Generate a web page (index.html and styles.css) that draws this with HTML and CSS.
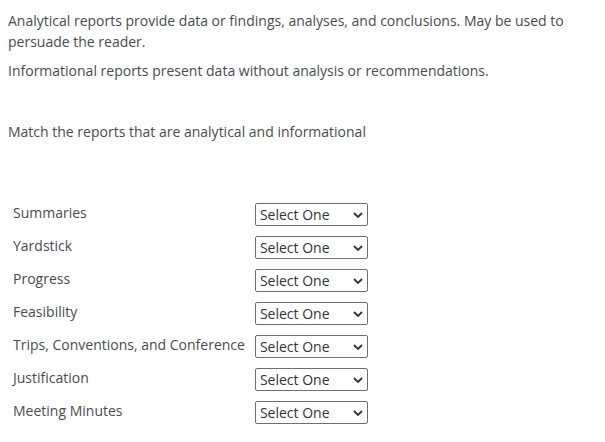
FILE: index.html
```html
<!DOCTYPE html>
<html>
<head>
<meta charset="utf-8">
<link rel="stylesheet" href="styles.css">
</head>
<body>
<div class="page">
  <p class="para">Analytical reports provide data or findings, analyses, and conclusions. May be used to persuade the reader.</p>
  <p class="para">Informational reports present data without analysis or recommendations.</p>
  <p class="para prompt">Match the reports that are analytical and informational</p>
  <table class="match">
    <tbody>
      <tr><td class="label">Summaries</td><td class="cell"><span class="sel"><select><option>Select One</option></select><svg class="chev" width="10" height="6" viewBox="0 0 10 6"><path d="M1 1 L5 5 L9 1" fill="none" stroke="#333" stroke-width="1.8"/></svg></span></td></tr>
      <tr><td class="label">Yardstick</td><td class="cell"><span class="sel"><select><option>Select One</option></select><svg class="chev" width="10" height="6" viewBox="0 0 10 6"><path d="M1 1 L5 5 L9 1" fill="none" stroke="#333" stroke-width="1.8"/></svg></span></td></tr>
      <tr><td class="label">Progress</td><td class="cell"><span class="sel"><select><option>Select One</option></select><svg class="chev" width="10" height="6" viewBox="0 0 10 6"><path d="M1 1 L5 5 L9 1" fill="none" stroke="#333" stroke-width="1.8"/></svg></span></td></tr>
      <tr><td class="label">Feasibility</td><td class="cell"><span class="sel"><select><option>Select One</option></select><svg class="chev" width="10" height="6" viewBox="0 0 10 6"><path d="M1 1 L5 5 L9 1" fill="none" stroke="#333" stroke-width="1.8"/></svg></span></td></tr>
      <tr><td class="label">Trips, Conventions, and Conference</td><td class="cell"><span class="sel"><select><option>Select One</option></select><svg class="chev" width="10" height="6" viewBox="0 0 10 6"><path d="M1 1 L5 5 L9 1" fill="none" stroke="#333" stroke-width="1.8"/></svg></span></td></tr>
      <tr><td class="label">Justification</td><td class="cell"><span class="sel"><select><option>Select One</option></select><svg class="chev" width="10" height="6" viewBox="0 0 10 6"><path d="M1 1 L5 5 L9 1" fill="none" stroke="#333" stroke-width="1.8"/></svg></span></td></tr>
      <tr><td class="label">Meeting Minutes</td><td class="cell"><span class="sel"><select><option>Select One</option></select><svg class="chev" width="10" height="6" viewBox="0 0 10 6"><path d="M1 1 L5 5 L9 1" fill="none" stroke="#333" stroke-width="1.8"/></svg></span></td></tr>
    </tbody>
  </table>
</div>
</body>
</html>
```
FILE: styles.css
```css
html, body {
  margin: 0;
  padding: 0;
  background: #ffffff;
}
body {
  font-family: "Open Sans", "DejaVu Sans", sans-serif;
  font-size: 14px;
  color: #494c4e;
}
.page {
  padding: 10px 8px 0 8px;
}
.para {
  margin: 0 0 8px 0;
  line-height: 21px;
}
.prompt {
  margin-top: 40px;
  margin-bottom: 0;
}
.match {
  border-collapse: collapse;
  margin-top: 56px;
}
.match tr {
  height: 33px;
}
.match td {
  padding: 0 5px;
  vertical-align: middle;
}
.label {
  white-space: nowrap;
  line-height: 21px;
  padding-bottom: 4px !important;
}
.sel {
  position: relative;
  display: block;
}
.sel select {
  appearance: none;
  -webkit-appearance: none;
  width: 113px;
  height: 23px;
  border: 1px solid #6f6f6f;
  border-radius: 2px;
  background: #fff;
  font-family: "Open Sans", "DejaVu Sans", sans-serif;
  font-size: 14px;
  color: #333;
  padding: 0 0 0 4px;
  margin: 0;
  display: block;
}
.chev {
  position: absolute;
  right: 5px;
  top: 9px;
  pointer-events: none;
}
```
